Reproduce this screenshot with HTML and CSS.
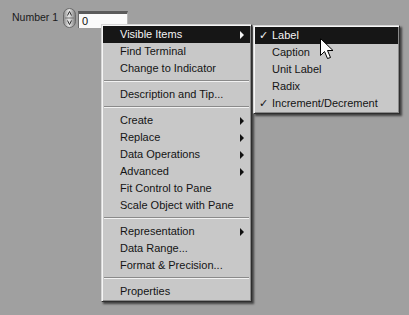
FILE: index.html
```html
<!DOCTYPE html>
<html>
<head>
<meta charset="utf-8">
<link rel="stylesheet" href="styles.css">
</head>
<body>
<div class="panel">
  <div class="control">
    <span class="label">Number 1</span>
    <span class="spinner">
      <svg width="13" height="20" viewBox="0 0 13 20">
        <defs>
          <linearGradient id="sg" x1="0" x2="1" y1="0" y2="0">
            <stop offset="0" stop-color="#8a8a8a"/>
            <stop offset="0.45" stop-color="#e8e8e8"/>
            <stop offset="1" stop-color="#7a7a7a"/>
          </linearGradient>
        </defs>
        <rect x="0.5" y="0.5" width="12" height="19" rx="6" fill="url(#sg)" stroke="#6a6a6a"/>
        <line x1="2" y1="10" x2="11" y2="10" stroke="#777"/>
        <path d="M6.5 3.5 L4.5 7.5 M6.5 3.5 L8.5 7.5" stroke="#333" fill="none"/>
        <path d="M6.5 16.5 L4.5 12.5 M6.5 16.5 L8.5 12.5" stroke="#333" fill="none"/>
      </svg>
    </span>
    <span class="field">0</span>
  </div>

  <div class="menu main-menu">
    <div class="item active">Visible Items<span class="arrow"></span></div>
    <div class="item">Find Terminal</div>
    <div class="item">Change to Indicator</div>
    <div class="sep"></div>
    <div class="item">Description and Tip...</div>
    <div class="sep"></div>
    <div class="item">Create<span class="arrow"></span></div>
    <div class="item">Replace<span class="arrow"></span></div>
    <div class="item">Data Operations<span class="arrow"></span></div>
    <div class="item">Advanced<span class="arrow"></span></div>
    <div class="item">Fit Control to Pane</div>
    <div class="item">Scale Object with Pane</div>
    <div class="sep"></div>
    <div class="item">Representation<span class="arrow"></span></div>
    <div class="item">Data Range...</div>
    <div class="item">Format &amp; Precision...</div>
    <div class="sep"></div>
    <div class="item">Properties</div>
  </div>

  <div class="menu sub-menu">
    <div class="item active"><span class="check">✓</span>Label</div>
    <div class="item">Caption</div>
    <div class="item">Unit Label</div>
    <div class="item">Radix</div>
    <div class="item"><span class="check">✓</span>Increment/Decrement</div>
  </div>

  <svg class="cursor" width="14" height="22" viewBox="0 0 14 22">
    <path d="M0.5 0.5 L0.5 17.5 L4.5 13.5 L7.5 20.5 L10.5 19.5 L7.5 12.5 L13 12.5 Z" fill="#fff" stroke="#000" stroke-linejoin="miter"/>
  </svg>
</div>
</body>
</html>
```

FILE: styles.css
```css
html, body {
  margin: 0;
  padding: 0;
  background: #a0a0a0;
}

.panel {
  position: relative;
  width: 409px;
  height: 315px;
  overflow: hidden;
  font-family: "Liberation Sans", Arial, sans-serif;
  font-size: 11px;
  color: #111;
}

.control {
  display: flex;
  align-items: flex-start;
  padding: 8px 0 0 12px;
}

.label {
  margin-top: 3px;
  line-height: 13px;
  font-size: 10.5px;
  color: #1a1a1a;
}

.spinner {
  display: block;
  width: 13px;
  height: 20px;
  margin-left: 5px;
}

.spinner svg {
  display: block;
}

.field {
  display: block;
  margin-left: 2px;
  margin-top: 3px;
  width: 45px;
  height: 14px;
  padding-left: 3px;
  background: #fafafa;
  border-top: 3px solid #5a5a5a;
  border-left: 1px solid #6a6a6a;
  border-right: 1px solid #b8b8b8;
  line-height: 15px;
  color: #111;
}

.menu {
  position: absolute;
  background: #c8c8c8;
  border-top: 1px solid #d6d6d6;
  border-left: 1px solid #d6d6d6;
  border-right: 1px solid #2e2e2e;
  border-bottom: 1px solid #2e2e2e;
  box-shadow: inset 1px 1px 0 #f6f6f6, inset -1px -1px 0 #8a8a8a, 2px 2px 2px rgba(0, 0, 0, 0.6);
  padding: 1px;
  box-sizing: border-box;
}

.main-menu {
  left: 101px;
  top: 24px;
  width: 151px;
}

.sub-menu {
  left: 253px;
  top: 25px;
  width: 147px;
}

.item {
  position: relative;
  height: 17px;
  line-height: 17px;
  padding-left: 17px;
  white-space: nowrap;
  color: #141414;
}

.item.active {
  background: #161616;
  color: #f4f4f4;
}

.arrow {
  position: absolute;
  right: 6px;
  top: 5px;
  width: 0;
  height: 0;
  border-top: 4px solid transparent;
  border-bottom: 4px solid transparent;
  border-left: 4px solid #111;
}

.item.active .arrow {
  border-left-color: #f4f4f4;
}

.check {
  position: absolute;
  left: 4px;
  top: 0;
  font-family: "DejaVu Sans", sans-serif;
  font-size: 11px;
}

.sep {
  height: 9px;
  position: relative;
}

.sep::after {
  content: "";
  position: absolute;
  left: 1px;
  right: 1px;
  top: 3px;
  height: 1px;
  background: #8a8a8a;
  border-bottom: 1px solid #f2f2f2;
}

.cursor {
  position: absolute;
  left: 320px;
  top: 38px;
}
```
